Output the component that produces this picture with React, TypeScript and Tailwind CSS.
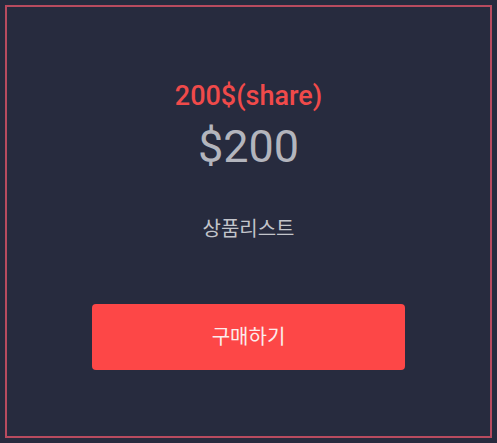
import React from 'react';

const App = () => {
  return (
    <div className="w-[497px] h-[443px] bg-[#272b3e] p-[5px] font-['Roboto','Noto_Sans_CJK_KR',sans-serif]">
      <div className="h-[433px] w-[487px] border-2 border-[#b84b5f] flex flex-col items-center">
        {/* Price header */}
        <div className="mt-[74px] text-[27px] leading-[30px] font-medium text-[#f04a4a]">200$(share)</div>
        <div className="mt-[11px] text-[45px] leading-[50px] text-[#b3b5bd]">$200</div>

        {/* Product list */}
        <div className="mt-[44px] text-[20px] leading-[26px] text-[#c2c4ca]">상품리스트</div>

        {/* Buy button */}
        <button className="mt-[62px] w-[313px] h-[66px] rounded-[4px] bg-[#fd4747] text-[20px] text-[#fbecec]">
          구매하기
        </button>
      </div>
    </div>
  );
};

export default App;
